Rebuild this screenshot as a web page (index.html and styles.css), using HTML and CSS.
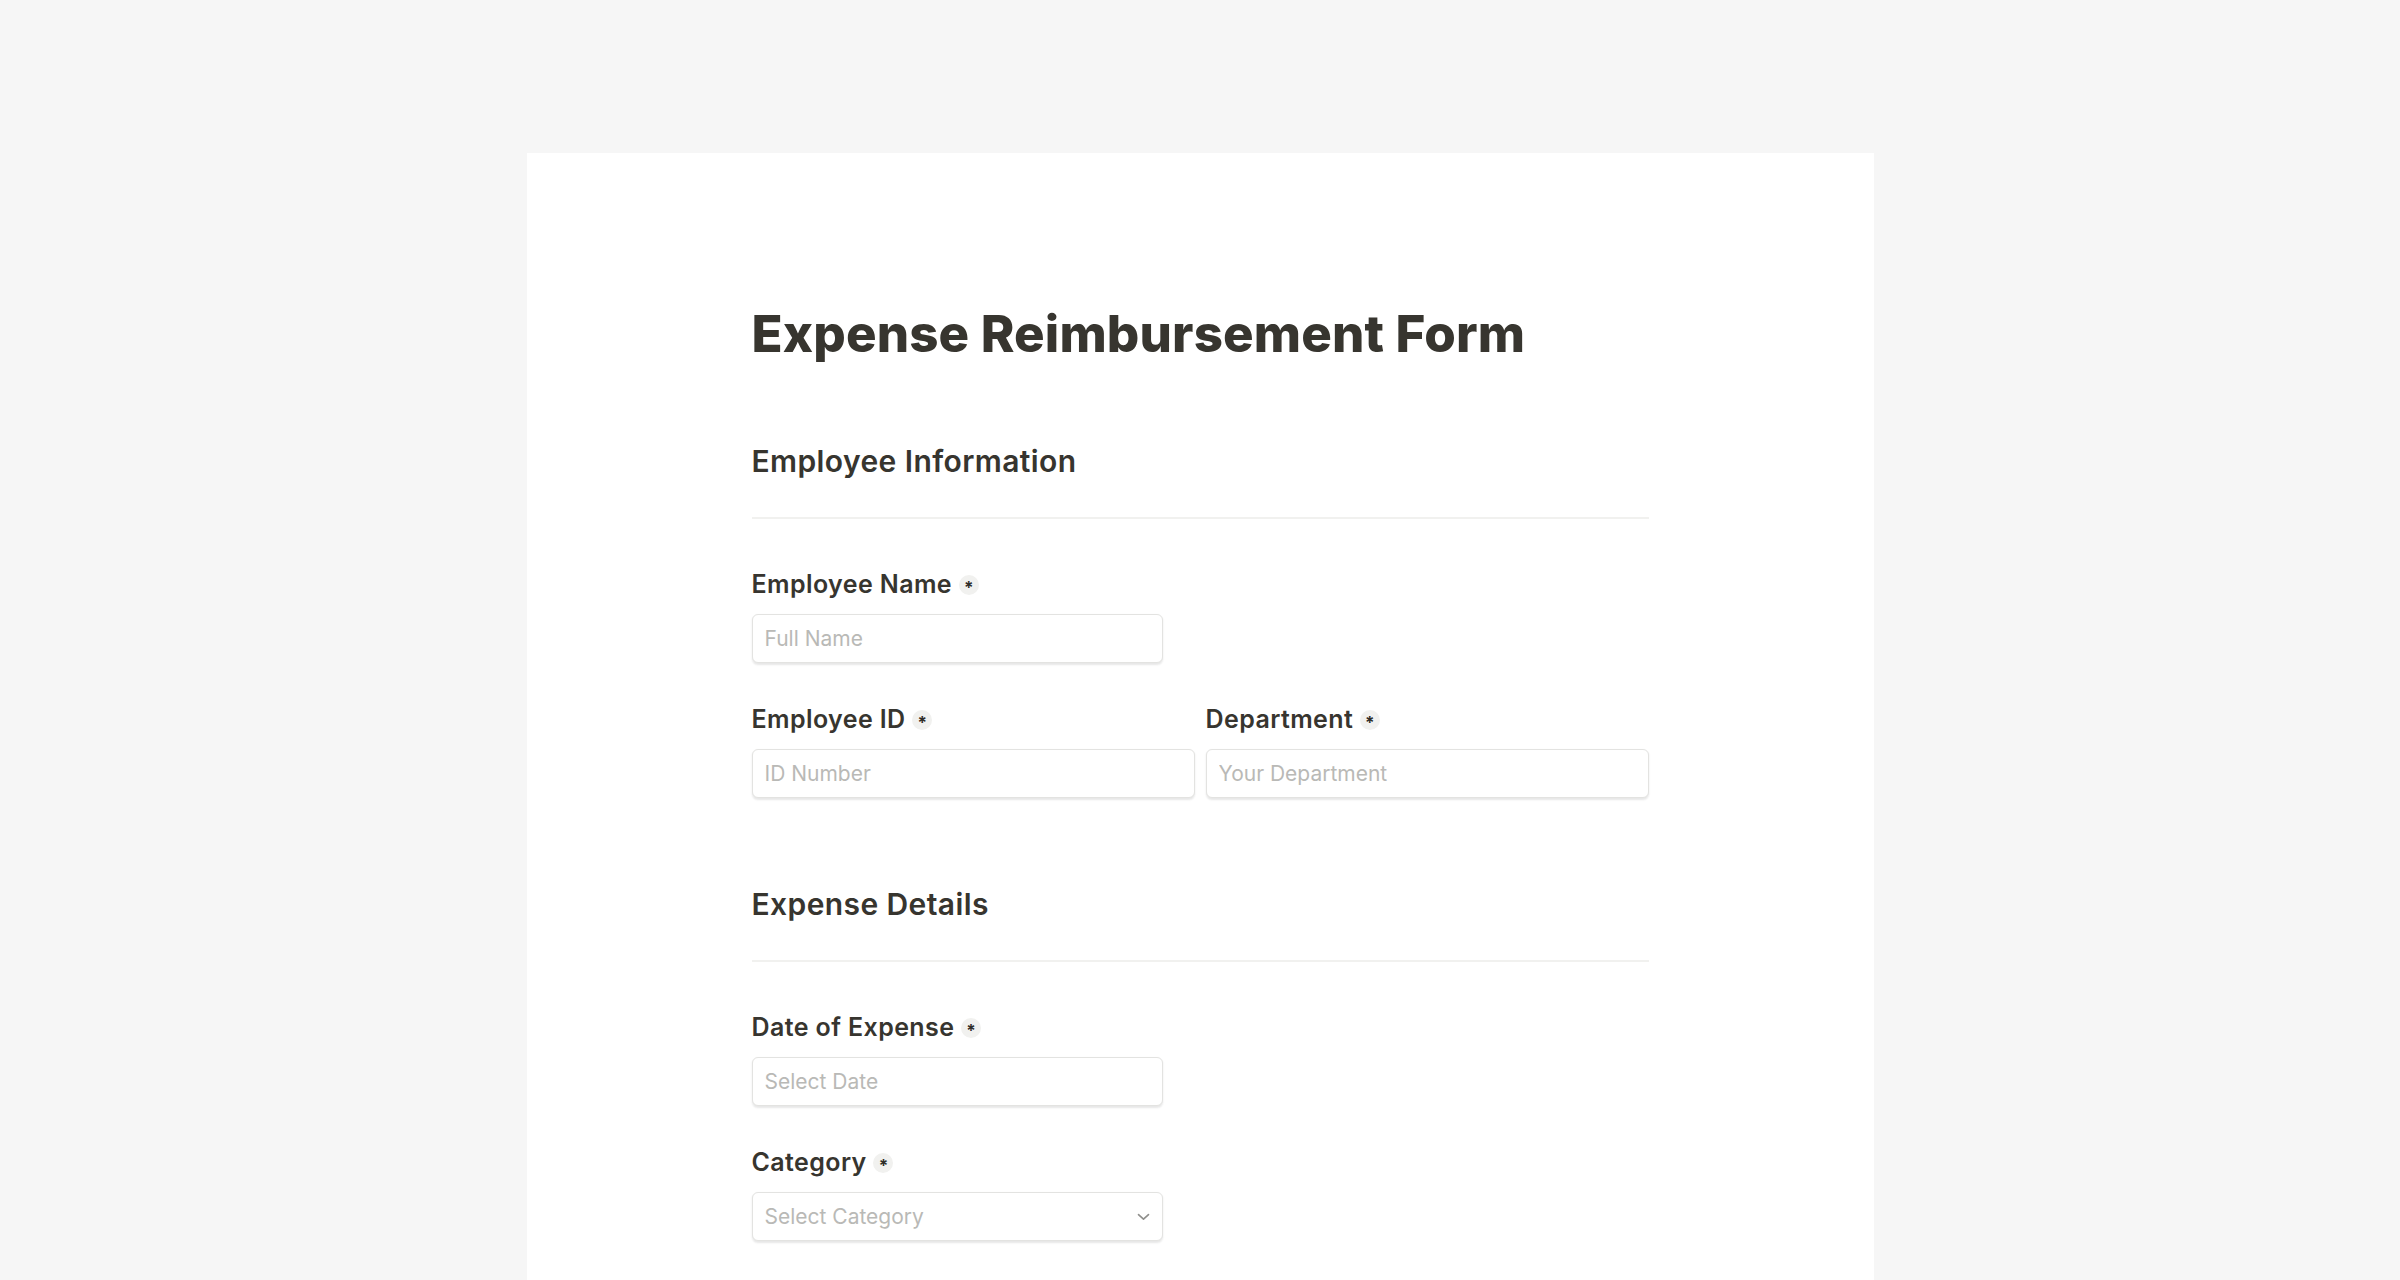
FILE: index.html
```html
<!DOCTYPE html>
<html lang="en">
<head>
<meta charset="utf-8">
<title>Expense Reimbursement Form</title>
<link rel="stylesheet" href="styles.css">
</head>
<body>
<div class="page">
  <main class="card">
    <div class="content">
      <h1 class="title">Expense Reimbursement Form</h1>

      <section class="section">
        <h2 class="section-title">Employee Information</h2>
        <div class="divider"></div>
        <div class="fields">
          <div class="field field-narrow">
            <label class="label">Employee Name <span class="req">*</span></label>
            <input class="input" type="text" placeholder="Full Name">
          </div>
          <div class="row">
            <div class="field">
              <label class="label">Employee ID <span class="req">*</span></label>
              <input class="input" type="text" placeholder="ID Number">
            </div>
            <div class="field">
              <label class="label">Department <span class="req">*</span></label>
              <input class="input" type="text" placeholder="Your Department">
            </div>
          </div>
        </div>
      </section>

      <section class="section section-next">
        <h2 class="section-title">Expense Details</h2>
        <div class="divider"></div>
        <div class="fields">
          <div class="field field-narrow">
            <label class="label">Date of Expense <span class="req">*</span></label>
            <input class="input" type="text" placeholder="Select Date">
          </div>
          <div class="field field-narrow">
            <label class="label">Category <span class="req">*</span></label>
            <div class="input select">
              <span class="placeholder">Select Category</span>
              <svg class="chevron" width="13" height="8" viewBox="0 0 13 8" aria-hidden="true">
                <path d="M1.5 1.6 L6.5 6.2 L11.5 1.6" fill="none" stroke="#8f8f8c" stroke-width="1.6" stroke-linecap="round" stroke-linejoin="round"/>
              </svg>
            </div>
          </div>
        </div>
      </section>
    </div>
  </main>
</div>
</body>
</html>
```
FILE: styles.css
```css
* { box-sizing: border-box; }

html, body {
  margin: 0;
  padding: 0;
}

body {
  background: #f6f6f6;
  font-family: Inter, "Noto Sans", "Liberation Sans", sans-serif;
  color: #37352f;
  height: 1280px;
  overflow: hidden;
}

.page {
  padding-top: 153px;
}

.card {
  width: 1347px;
  margin: 0 auto;
  background: #ffffff;
  min-height: 1127px;
  padding-top: 150px;
}

.content {
  width: 897px;
  margin: 0 auto;
}

.title {
  margin: 0;
  font-size: 51px;
  line-height: 61px;
  font-weight: 800;
  letter-spacing: 0.15px;
  color: #37352f;
}

.section {
  margin-top: 78px;
}

.section-next {
  margin-top: 87px;
}

.section-title {
  margin: 0;
  font-size: 30px;
  line-height: 39px;
  font-weight: 600;
  letter-spacing: 0.4px;
  color: #37352f;
}

.divider {
  margin-top: 36px;
  height: 2px;
  background: #f1f1ef;
}

.fields {
  margin-top: 50px;
  display: flex;
  flex-direction: column;
  gap: 41px;
}

.field {
  display: flex;
  flex-direction: column;
}

.field-narrow {
  width: 411px;
}

.row {
  display: grid;
  grid-template-columns: 1fr 1fr;
  gap: 11px;
}

.label {
  display: block;
  font-size: 25px;
  line-height: 30px;
  font-weight: 600;
  letter-spacing: 0.4px;
  color: #37352f;
  margin-bottom: 15px;
}

.req {
  display: inline-block;
  vertical-align: middle;
  width: 20px;
  height: 20px;
  border-radius: 50%;
  background: #f1f1ef;
  color: #2f2d28;
  font-size: 17px;
  line-height: 27px;
  text-align: center;
  font-weight: 700;
  letter-spacing: 0;
  margin-left: 0;
  margin-top: -2px;
}

.input {
  display: block;
  width: 100%;
  height: 49px;
  border: 1.5px solid #e3e3e1;
  border-radius: 6px;
  box-shadow: 0 1.5px 2px rgba(15, 15, 15, 0.1);
  background: #ffffff;
  padding: 0 12px;
  font-family: Inter, "Noto Sans", "Liberation Sans", sans-serif;
  font-size: 21px;
  color: #37352f;
  outline: none;
}

.input::placeholder {
  color: #b9b9b6;
}

.select {
  display: flex;
  align-items: center;
  justify-content: space-between;
  padding-right: 12px;
}

.placeholder {
  color: #b9b9b6;
  font-size: 21px;
}

.chevron {
  display: block;
}
```
